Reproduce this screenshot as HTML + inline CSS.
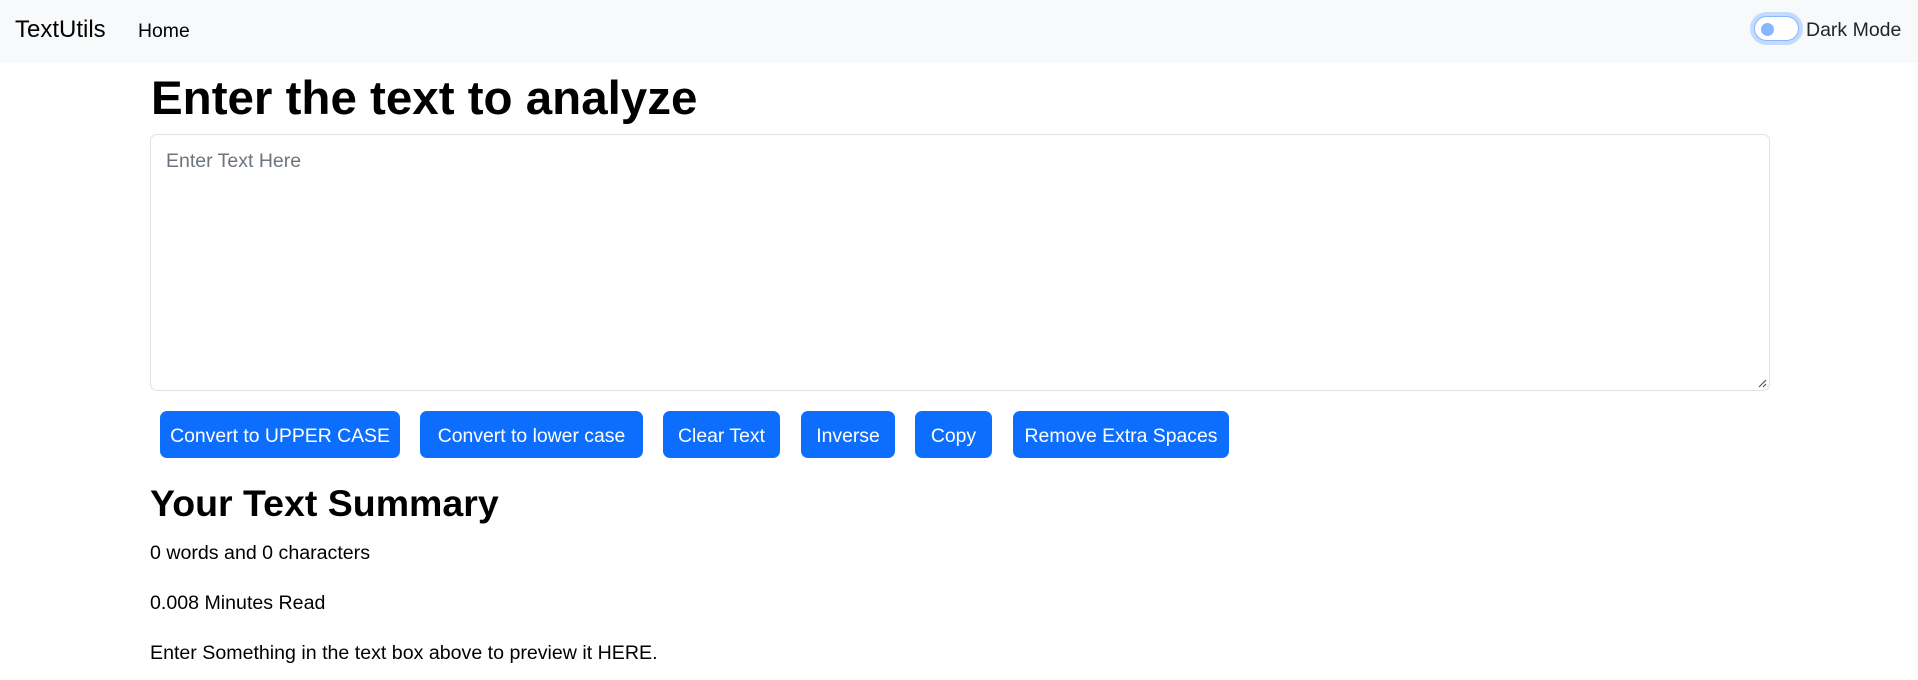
<!DOCTYPE html>
<html><head><meta charset="utf-8"><style>
*{box-sizing:border-box;margin:0;padding:0}
body{width:1918px;height:680px;background:#fff;font-family:"Liberation Sans",sans-serif;color:#212529;position:relative;overflow:hidden}
.nav{position:absolute;left:0;top:0;width:1918px;height:63px;background:#f8f9fa}
.a{position:absolute;white-space:nowrap;line-height:1}
.btn{position:absolute;top:411px;height:47px;background:#0d6efd;color:#fff;border-radius:7px;font-size:19.4px;display:flex;align-items:center;justify-content:center;white-space:nowrap;padding-top:3px}
</style></head><body>
<div class="nav"></div>
<div class="a" style="left:15px;top:18px;font-size:24px;color:#000">TextUtils</div>
<div class="a" style="left:138px;top:22px;font-size:19.4px;color:#000">Home</div>
<div class="a" style="left:1754px;top:16px;width:45px;height:25px;border-radius:13px;background:#fff;border:1px solid #86b7fe;box-shadow:0 0 0 4px #c2dbfe"></div>
<div class="a" style="left:1761px;top:23px;width:13px;height:13px;border-radius:50%;background:#86b7fe"></div>
<div class="a" style="left:1806px;top:21px;font-size:19.5px;color:#212529">Dark Mode</div>
<div class="a" style="left:151px;top:75px;font-size:47.5px;font-weight:bold;color:#000">Enter the text to analyze</div>
<div class="a" style="left:150px;top:134px;width:1620px;height:257px;border:1px solid #dee2e6;border-radius:7px"></div>
<div class="a" style="left:166px;top:152px;font-size:19.5px;color:#6c757d">Enter Text Here</div>
<svg class="a" style="left:1757px;top:378px" width="10" height="10"><path d="M2 9L9 2M6 9L9 6" stroke="#555" stroke-width="1.2"/></svg>
<div class="btn" style="left:160px;width:240px">Convert to UPPER CASE</div>
<div class="btn" style="left:420px;width:223px">Convert to lower case</div>
<div class="btn" style="left:663px;width:117px">Clear Text</div>
<div class="btn" style="left:801px;width:94px">Inverse</div>
<div class="btn" style="left:915px;width:77px">Copy</div>
<div class="btn" style="left:1013px;width:216px">Remove Extra Spaces</div>
<div class="a" style="left:150px;top:485px;font-size:37.5px;font-weight:bold;color:#000">Your Text Summary</div>
<div class="a" style="left:150px;top:544px;font-size:19.6px;color:#000">0 words and 0 characters</div>
<div class="a" style="left:150px;top:594px;font-size:19.6px;color:#000">0.008 Minutes Read</div>
<div class="a" style="left:150px;top:644px;font-size:19.6px;color:#000">Enter Something in the text box above to preview it HERE.</div>
</body></html>
